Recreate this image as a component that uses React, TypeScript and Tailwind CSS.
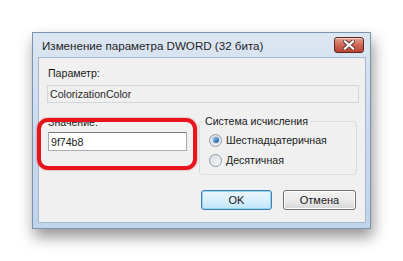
import React from "react";

function CloseButton() {
  return (
    <div className="mt-[4px] mr-[6px] flex h-[16px] w-[30px] items-center justify-center rounded-[3px] border border-[#5e2620] bg-gradient-to-b from-[#e6a091] via-[#cf6654] to-[#bb4332] shadow-[inset_0_1px_0_rgba(255,255,255,0.5)]">
      <svg width="12" height="10" viewBox="0 0 12 10">
        <path d="M2 1.5 L10 8.5 M10 1.5 L2 8.5" stroke="#5b3a36" strokeWidth="4" strokeLinecap="square" />
        <path d="M2 1.5 L10 8.5 M10 1.5 L2 8.5" stroke="#ffffff" strokeWidth="2.2" strokeLinecap="square" />
      </svg>
    </div>
  );
}

function Radio({ checked, label }: { checked?: boolean; label: string }) {
  return (
    <div className="flex h-[16px] items-center gap-[4px] pl-[9px]">
      <span className="flex h-[13px] w-[13px] items-center justify-center rounded-full border border-[#8d9aa7] bg-gradient-to-br from-[#d9dde2] to-[#f6f7f8]">
        {checked && (
          <span className="h-[6px] w-[6px] rounded-full bg-gradient-to-br from-[#8fcbf2] to-[#16589a] shadow-[0_0_1px_#2a6aa8]" />
        )}
      </span>
      <span>{label}</span>
    </div>
  );
}

export default function App() {
  return (
    <div
      className="relative h-[261px] w-[403px] overflow-hidden bg-white pl-[32px] pt-[32px] text-[10.6px] leading-[14px] text-[#1a1a1a]"
      style={{ fontFamily: '"Liberation Sans", Arial, sans-serif' }}
    >
      <div className="flex h-[197px] w-[339px] flex-col border border-[#7d93ad] bg-gradient-to-b from-[#dce6f2] via-[#cbdbee] to-[#c0d4ea] shadow-[2px_8px_14px_rgba(0,0,0,0.42)]">
        <div className="flex h-[24px] items-start justify-between">
          <span className="pl-[9px] pt-[6px] text-[11.6px] text-[#1e1e1e]">
            Изменение параметра DWORD (32 бита)
          </span>
          <CloseButton />
        </div>
        <div className="mb-[5px] ml-[5px] mr-[4px] flex flex-1 flex-col border border-[#a3b8cf] bg-[#f0f0f0] px-[8px]">
          <div className="pt-[8px] pl-[1px]">Параметр:</div>
          <div className="mt-[5px] flex h-[18px] w-[312px] items-center border border-[#d3d7dc] px-[2px] text-[#2a2a2a]">
            ColorizationColor
          </div>
          <div className="mt-[11px] flex">
            <div className="ml-[1px] flex w-[139px] flex-col pt-[1px]">
              <span>Значение:</span>
              <div className="mt-[3px] flex h-[19px] items-center border border-[#abadb3] border-t-[#7a7d84] bg-white px-[2px]">
                9f74b8
              </div>
            </div>
            <fieldset className="ml-auto h-[61px] w-[158px] rounded-[3px] border border-[#d5dfe5] pb-[6px]">
              <legend className="ml-[3px] px-[2px]">Система исчисления</legend>
              <div className="mt-[4px] flex flex-col gap-[4px]">
                <Radio checked label="Шестнадцатеричная" />
                <Radio label="Десятичная" />
              </div>
            </fieldset>
          </div>
          <div className="mt-[15px] flex justify-end gap-[11px] pr-[1px]">
            <button className="h-[20px] w-[71px] rounded-[3px] border border-[#3c7fb1] bg-gradient-to-b from-[#eaf6fd] via-[#d9f0fc] to-[#bee6fd] text-[11px] shadow-[inset_0_0_0_1px_#97d3f0]">
              OK
            </button>
            <button className="h-[20px] w-[73px] rounded-[3px] border border-[#707070] bg-gradient-to-b from-[#f2f2f2] via-[#ebebeb] to-[#d6d6d6] text-[11px] shadow-[inset_0_0_0_1px_#fcfcfc]">
              Отмена
            </button>
          </div>
        </div>
      </div>
      <div className="absolute left-[37px] top-[118px] h-[52px] w-[160px] rounded-[11px] border-[4px] border-[#e8141b] shadow-[0_0_2px_rgba(200,0,0,0.6)]" />
    </div>
  );
}
